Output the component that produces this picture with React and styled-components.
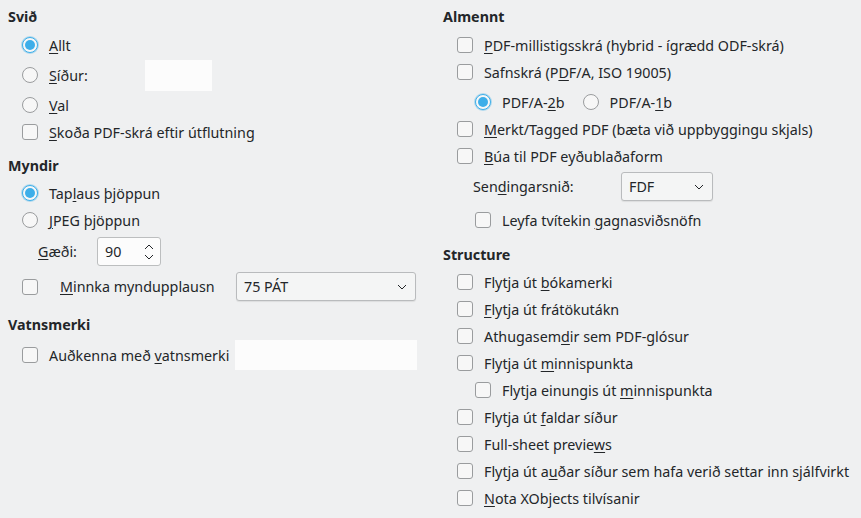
import React from 'react';
import styled, { createGlobalStyle } from 'styled-components';

const GlobalStyle = createGlobalStyle`
    html, body {
        margin: 0;
        padding: 0;
        background: #eff0f1;
    }
    body {
        font-family: "Noto Sans", "DejaVu Sans", sans-serif;
        font-size: 14.3px;
        color: #232629;
    }
`;

const Page = styled.div`
    display: grid;
    grid-template-columns: 409px 1fr;
    column-gap: 26px;
    padding: 7px 8px 0 8px;
    width: 861px;
    height: 518px;
    box-sizing: border-box;
`;

const Column = styled.div`
    display: flex;
    flex-direction: column;
`;

const Header = styled.div`
    font-weight: bold;
    height: 20px;
    line-height: 20px;
    margin-top: ${(p) => p.$top || 0}px;
`;

const Row = styled.div`
    display: flex;
    align-items: center;
    height: ${(p) => p.$h || 27}px;
    margin-top: ${(p) => p.$top || 0}px;
    padding-left: ${(p) => p.$indent ?? 14}px;
    white-space: nowrap;
`;

const Label = styled.span`
    width: ${(p) => (p.$w ? `${p.$w}px` : 'auto')};
    flex-shrink: 0;
`;

const U = styled.span`
    text-decoration: underline;
    text-underline-offset: 2px;
    text-decoration-thickness: 1px;
`;

const Box = styled.span`
    width: 16px;
    height: 16px;
    box-sizing: border-box;
    border: 1px solid #9a9c9e;
    border-radius: 3px;
    background: #f7f7f7;
    flex-shrink: 0;
    margin-right: ${(p) => p.$gap ?? 11}px;
`;

const Radio = styled.span`
    position: relative;
    width: 16px;
    height: 16px;
    box-sizing: border-box;
    border-radius: 50%;
    border: 1px solid ${(p) => (p.$on ? '#3daee9' : '#9a9c9e')};
    background: #f7f7f7;
    flex-shrink: 0;
    margin-right: 11px;
    margin-left: ${(p) => p.$left || 0}px;
    box-shadow: ${(p) => (p.$on ? '0 0 0 1px rgba(61,174,233,0.35)' : 'none')};

    &::after {
        content: '';
        display: ${(p) => (p.$on ? 'block' : 'none')};
        position: absolute;
        left: 2px;
        top: 2px;
        width: 10px;
        height: 10px;
        border-radius: 50%;
        background: #3daee9;
    }
`;

const Field = styled.span`
    display: block;
    width: ${(p) => p.$w}px;
    height: ${(p) => p.$h || 30}px;
    background: #fcfcfc;
    flex-shrink: 0;
`;

const Spin = styled.span`
    display: flex;
    align-items: center;
    justify-content: space-between;
    box-sizing: border-box;
    width: 64px;
    height: 29px;
    padding: 0 6px 0 7px;
    background: #fcfcfc;
    border: 1px solid #bcbebf;
    border-radius: 3px;
`;

const Combo = styled.span`
    display: flex;
    align-items: center;
    justify-content: space-between;
    box-sizing: border-box;
    width: ${(p) => p.$w}px;
    height: 29px;
    padding: 0 8px 0 7px;
    background: #f4f5f5;
    border: 1px solid #b9bbbd;
    border-radius: 3px;
    box-shadow: 0 1px 1px rgba(0, 0, 0, 0.08);
`;

const Chevron = () => (
    <svg width="10" height="6" viewBox="0 0 10 6">
        <path d="M1 1 L5 5 L9 1" fill="none" stroke="#232629" strokeWidth="1" />
    </svg>
);

const SpinArrows = () => (
    <svg width="10" height="18" viewBox="0 0 10 18">
        <path d="M1 6 L5 2 L9 6" fill="none" stroke="#232629" strokeWidth="1" />
        <path d="M1 12 L5 16 L9 12" fill="none" stroke="#232629" strokeWidth="1" />
    </svg>
);

function Check({ children, indent, top, h }) {
    return (
        <Row $indent={indent} $top={top} $h={h}>
            <Box />
            <span>{children}</span>
        </Row>
    );
}

const structure = [
    [<>Flytja út <U>b</U>ókamerki</>],
    [<><U>F</U>lytja út frátökutákn</>],
    [<>Athugasem<U>d</U>ir sem PDF-glósur</>],
    [<>Flytja út <U>m</U>innispunkta</>],
    [<>Flytja einungis út <U>m</U>innispunkta</>, 32],
    [<>Flytja út <U>f</U>aldar síður</>],
    [<>Full-sheet previe<U>w</U>s</>],
    [<>Flytja út a<U>u</U>ðar síður sem hafa verið settar inn sjálfvirkt</>],
    [<><U>N</U>ota XObjects tilvísanir</>],
];

export default function App() {
    return (
        <>
            <GlobalStyle />
            <Page>
                <Column>
                    <Header>Svið</Header>
                    <Row $top={4.5}>
                        <Radio $on />
                        <span><U>A</U>llt</span>
                    </Row>
                    <Row $top={3}>
                        <Radio />
                        <Label $w={96}><U>S</U>íður:</Label>
                        <Field $w={67} $h={31} />
                    </Row>
                    <Row $top={3}>
                        <Radio />
                        <span><U>V</U>al</span>
                    </Row>
                    <Check>
                        <U>S</U>koða PDF-skrá eftir útflutning
                    </Check>

                    <Header $top={10.5}>Myndir</Header>
                    <Row $top={3.5}>
                        <Radio $on />
                        <span>Tap<U>l</U>aus þjöppun</span>
                    </Row>
                    <Row>
                        <Radio />
                        <span><U>J</U>PEG þjöppun</span>
                    </Row>
                    <Row $indent={30} $h={29} $top={3.5}>
                        <Label $w={59}><U>G</U>æði:</Label>
                        <Spin>
                            <span>90</span>
                            <SpinArrows />
                        </Spin>
                    </Row>
                    <Row $h={29} $top={6}>
                        <Box $gap={22} />
                        <Label $w={176}><U>M</U>innka myndupplausn</Label>
                        <Combo $w={180}>
                            <span>75 PÁT</span>
                            <Chevron />
                        </Combo>
                    </Row>

                    <Header $top={14}>Vatnsmerki</Header>
                    <Row $h={30} $top={5}>
                        <Box />
                        <Label $w={186}>Auðkenna með <U>v</U>atnsmerki</Label>
                        <Field $w={182} $h={30} />
                    </Row>
                </Column>

                <Column>
                    <Header>Almennt</Header>
                    <Check top={4.5}>
                        <U>P</U>DF-millistigsskrá (hybrid - ígrædd ODF-skrá)
                    </Check>
                    <Check>
                        Safnskrá (P<U>D</U>F/A, ISO 19005)
                    </Check>
                    <Row $indent={32} $top={3}>
                        <Radio $on />
                        <span>PDF/A-<U>2</U>b</span>
                        <Radio $left={18} />
                        <span>PDF/A-<U>1</U>b</span>
                    </Row>
                    <Check>
                        <U>M</U>erkt/Tagged PDF (bæta við uppbyggingu skjals)
                    </Check>
                    <Check>
                        <U>B</U>úa til PDF eyðublaðaform
                    </Check>
                    <Row $indent={30} $h={29} $top={2.5}>
                        <Label $w={148}>Sen<U>d</U>ingarsnið:</Label>
                        <Combo $w={92}>
                            <span>FDF</span>
                            <Chevron />
                        </Combo>
                    </Row>
                    <Check indent={32} top={5.5}>
                        Leyfa tvítekin <U>g</U>agnasviðsnöfn
                    </Check>

                    <Header $top={11.5}>Structure</Header>
                    {structure.map(([text, indent], i) => (
                        <Check key={i} indent={indent} top={i === 0 ? 3.5 : 0}>
                            {text}
                        </Check>
                    ))}
                </Column>
            </Page>
        </>
    );
}
